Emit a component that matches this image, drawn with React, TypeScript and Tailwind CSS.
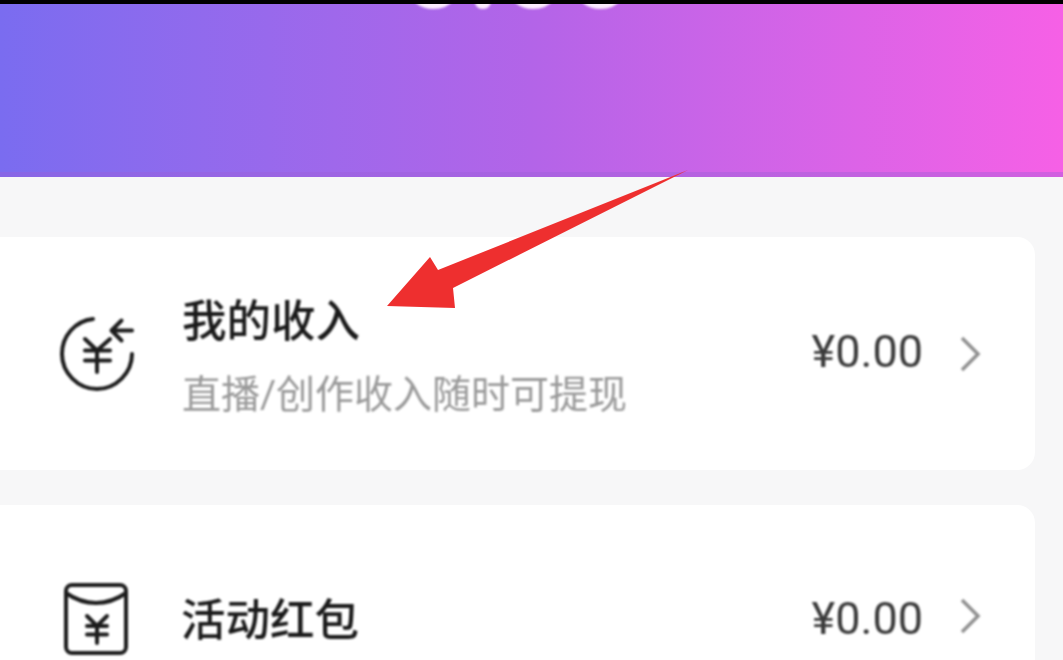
import * as React from 'react'

const cjk = 'font-["Roboto","Noto_Sans_CJK_SC",sans-serif]'

function IncomeIcon() {
  return (
    <svg width="84" height="84" viewBox="0 0 84 84" fill="none" stroke="#1c1c1c" strokeWidth="4" strokeLinecap="round" strokeLinejoin="round" className="shrink-0">
      <path d="M38 7C20 9 7 24 7 42c0 19 16 35 35 35s35-16 35-35" />
      <path d="M57 18.5h20M66.500 8.500l-10 10 10 10" />
      <path d="M30 27l12 11.500L55 27M30 38.500h25M30 48.500h25M42 38.500V60" />
    </svg>
  )
}

function PacketIcon() {
  return (
    <svg width="64" height="72" viewBox="0 0 64 72" fill="none" stroke="#1c1c1c" strokeWidth="4" strokeLinecap="round" strokeLinejoin="round" className="shrink-0">
      <rect x="2" y="2" width="60" height="68" rx="6" />
      <path d="M2 10c10 7 20 10 30 10s20-3 30-10" />
      <path d="M23 33l10 10 10-10M23 43h20M23 51.500h20M33 43v17" />
    </svg>
  )
}

function Chevron() {
  return (
    <svg width="22" height="36" viewBox="0 0 22 36" fill="none" stroke="#8f8f8f" strokeWidth="3.5" className="shrink-0">
      <path d="M3 2l16 16L3 34" />
    </svg>
  )
}

export default function App() {
  return (
    <div className={`relative flex h-[660px] w-[1063px] flex-col overflow-hidden bg-black ${cjk}`}>
      <div className="h-1 shrink-0" />
      <div className="relative h-[173px] shrink-0 overflow-hidden border-b-[5px] border-b-[#9a5fd8]/40 bg-gradient-to-r from-[#7a6cf0] via-[#b364e8] to-[#f660e6]">
        <div className="absolute left-[400px] top-[-106px] text-[118px] leading-[140px] font-medium text-[#fbeafd] blur-[1px]">0.00</div>
      </div>
      <div className="flex flex-1 flex-col gap-[35px] bg-[#f7f7f8] pt-[60px] pr-[28px]">
        <div className="flex h-[233px] shrink-0 items-center rounded-r-[18px] bg-white pl-[55px] pr-[54px]">
          <div className="flex w-full items-center blur-[0.8px]">
            <IncomeIcon />
            <div className="ml-[43px] flex-1 pt-[6px]">
              <div className="text-[44.500px] leading-[56px] font-medium text-[#1a1a1a]">我的收入</div>
              <div className="mt-[20px] text-[39px] leading-[50px] text-[#999]">直播/创作收入随时可提现</div>
            </div>
            <span className="mb-[4px] text-[45px] text-[#3a3a3a]">¥0.00</span>
            <div className="ml-[36px]"><Chevron /></div>
          </div>
        </div>
        <div className="h-[233px] shrink-0 rounded-r-[18px] bg-white pl-[64px] pr-[54px] pt-[78px]">
          <div className="flex w-full items-start blur-[0.8px]">
            <PacketIcon />
            <div className="ml-[53px] flex-1 pt-[10px] text-[44.500px] leading-[56px] font-medium text-[#1a1a1a]">活动红包</div>
            <span className="pt-[8px] text-[45px] leading-[56px] text-[#3a3a3a]">¥0.00</span>
            <div className="ml-[36px] pt-[15px]"><Chevron /></div>
          </div>
        </div>
      </div>
      <svg width="1063" height="660" viewBox="0 0 1063 660" className="pointer-events-none absolute left-0 top-0 blur-[0.6px]">
        <path d="M387 306L430 257L438 270L688 170L453 288L455 308Z" fill="#ee2f2f" />
      </svg>
    </div>
  )
}
